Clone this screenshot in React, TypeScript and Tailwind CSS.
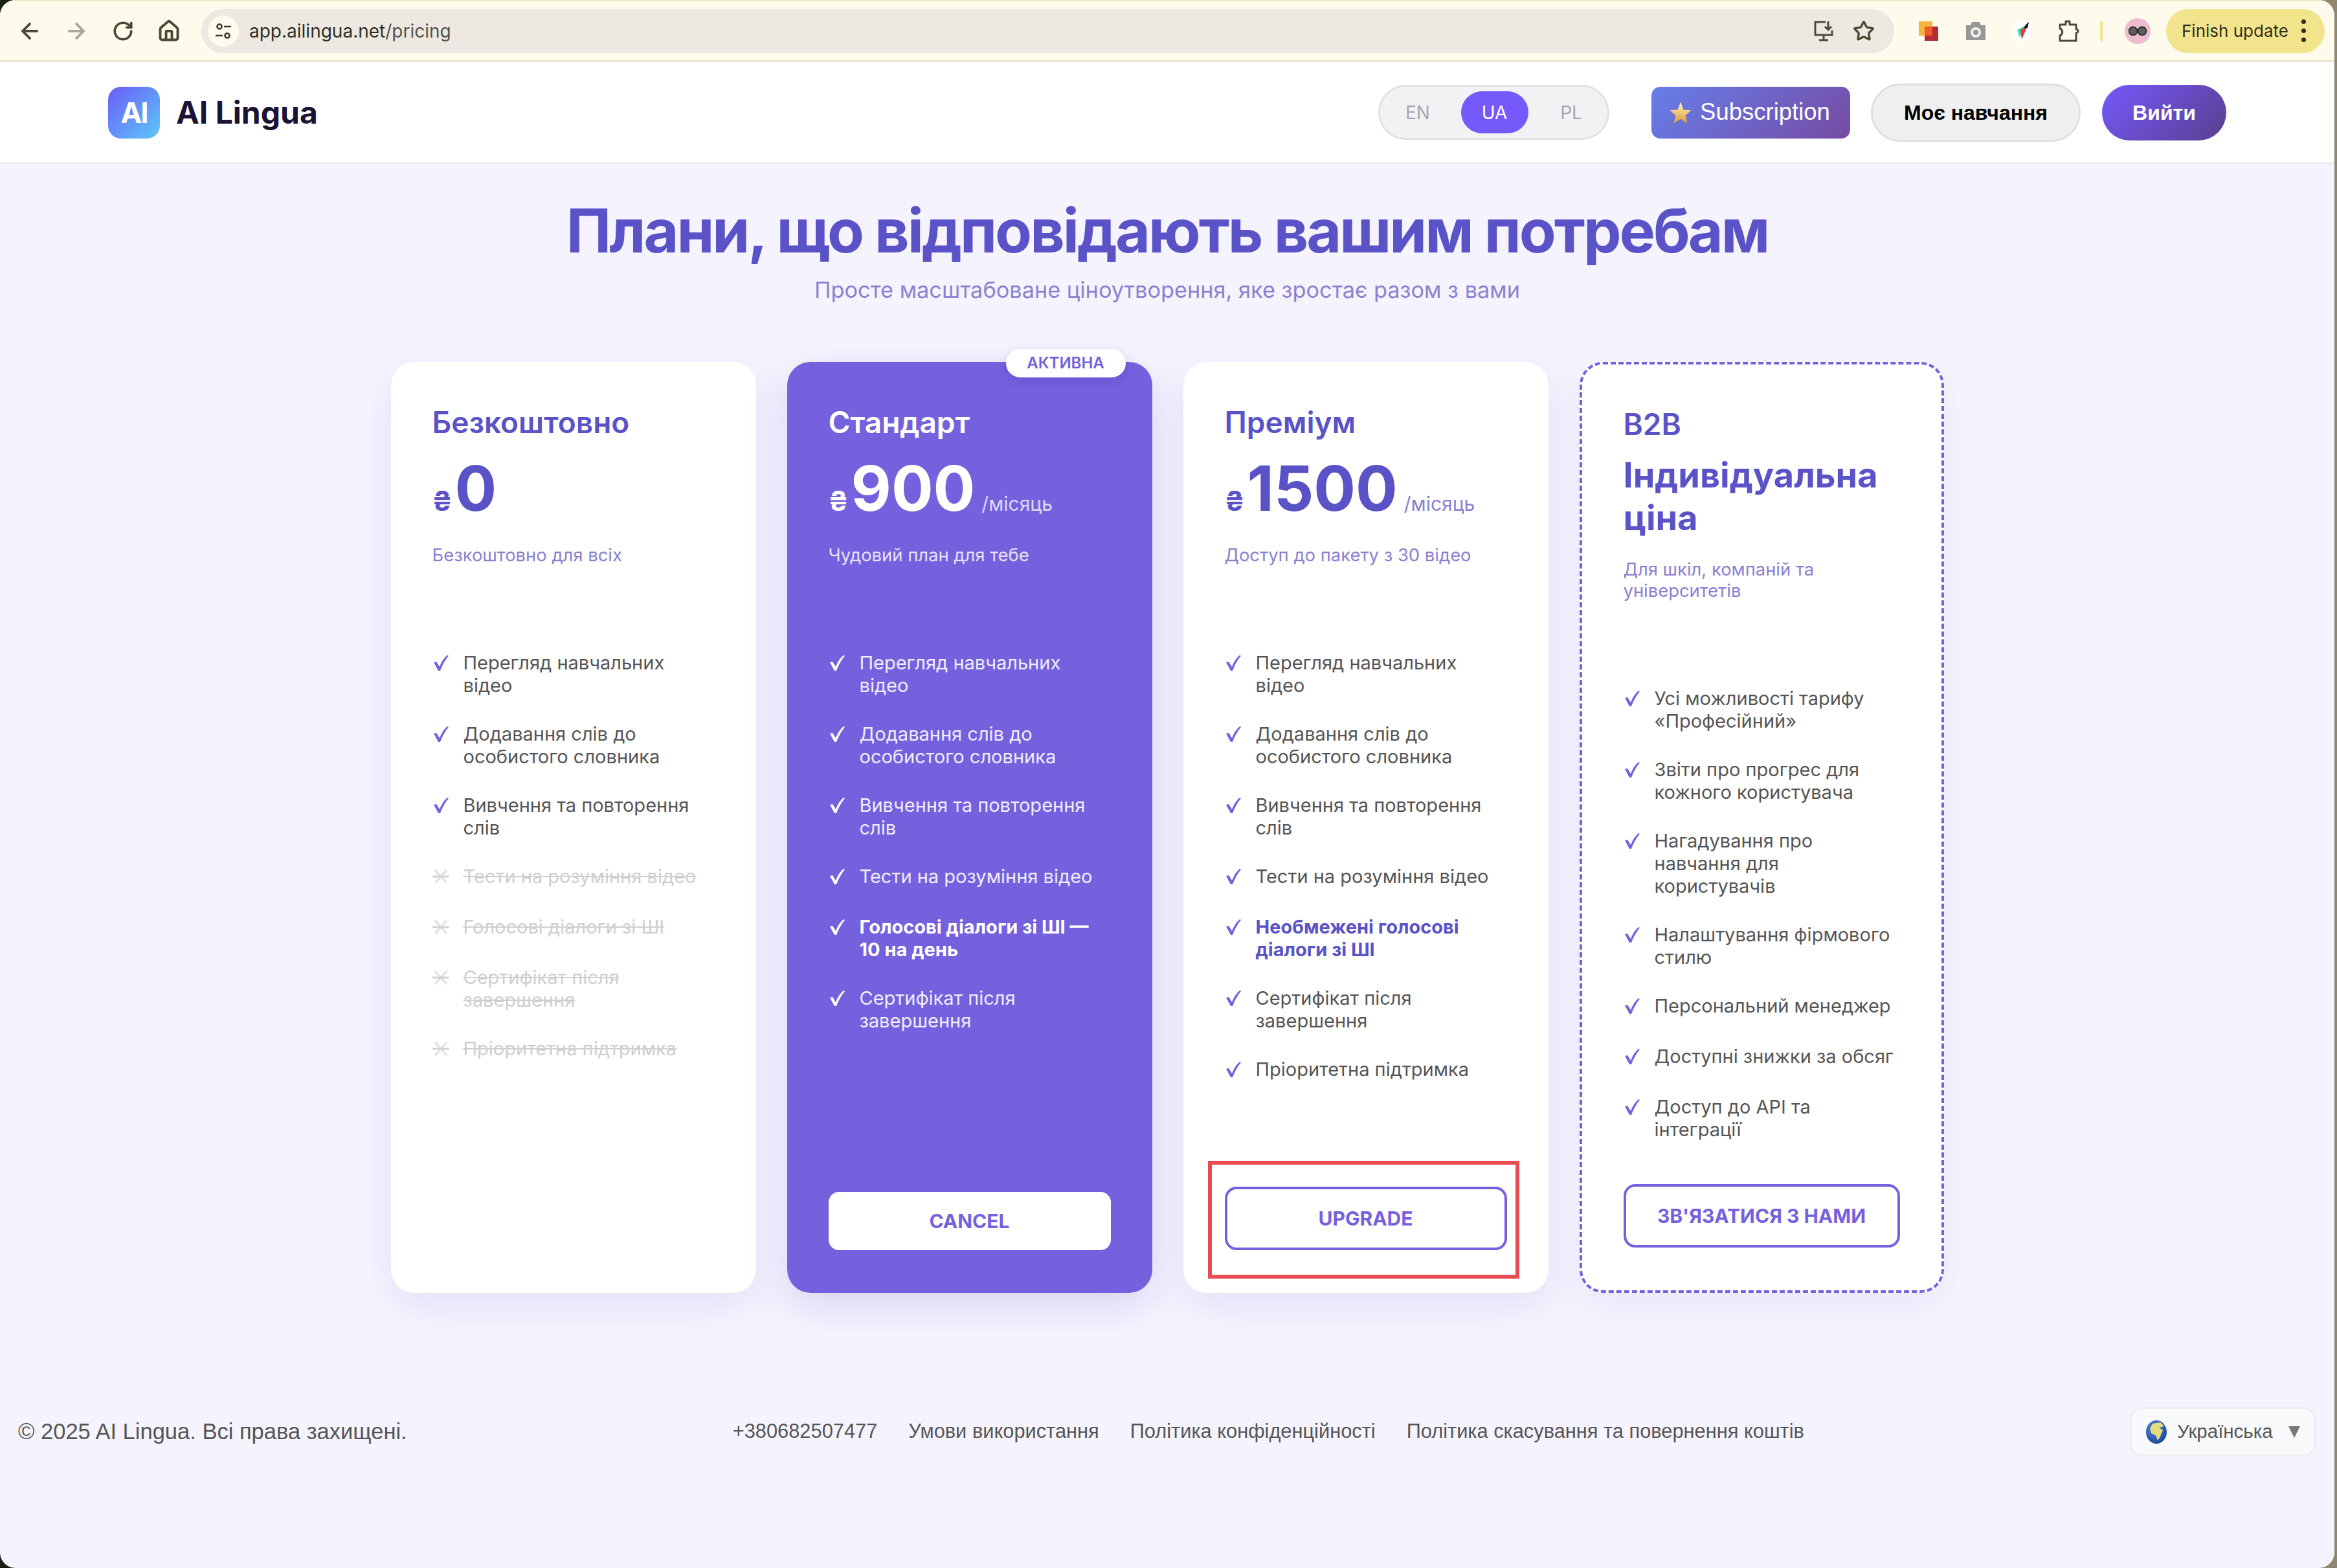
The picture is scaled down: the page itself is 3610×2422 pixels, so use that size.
import React from 'react';
import { ArrowLeft, ArrowRight, RotateCw, Star, House } from 'lucide-react';

type Feature = { text: string; off?: boolean; bold?: boolean };

const base: Feature[] = [
  { text: 'Перегляд навчальних відео' },
  { text: 'Додавання слів до особистого словника' },
  { text: 'Вивчення та повторення слів' },
];

const freeFeatures: Feature[] = [
  ...base,
  { text: 'Тести на розуміння відео', off: true },
  { text: 'Голосові діалоги зі ШІ', off: true },
  { text: 'Сертифікат після завершення', off: true },
  { text: 'Пріоритетна підтримка', off: true },
];

const standardFeatures: Feature[] = [
  ...base,
  { text: 'Тести на розуміння відео' },
  { text: 'Голосові діалоги зі ШІ — 10 на день', bold: true },
  { text: 'Сертифікат після завершення' },
];

const premiumFeatures: Feature[] = [
  ...base,
  { text: 'Тести на розуміння відео' },
  { text: 'Необмежені голосові діалоги зі ШІ', bold: true },
  { text: 'Сертифікат після завершення' },
  { text: 'Пріоритетна підтримка' },
];

const b2bFeatures: Feature[] = [
  { text: 'Усі можливості тарифу «Професійний»' },
  { text: 'Звіти про прогрес для кожного користувача' },
  { text: 'Нагадування про навчання для користувачів' },
  { text: 'Налаштування фірмового стилю' },
  { text: 'Персональний менеджер' },
  { text: 'Доступні знижки за обсяг' },
  { text: 'Доступ до API та інтеграції' },
];

const CheckMark = ({ color }: { color: string }) => (
  <svg width="26" height="26" viewBox="0 0 26 26" className="shrink-0 mt-[5px]">
    <path d="M2 12 L6 11 L11 19 C14 11 18 5 23 1 L25 2 C19 9 15 17 12 25 L9 25 Z" fill={color} />
  </svg>
);

const CrossMark = () => (
  <svg width="26" height="26" viewBox="0 0 26 26" className="shrink-0 mt-[5px]">
    <path d="M4 3 L22 23 M22 3 L4 23" fill="none" stroke="#e4e4e4" strokeWidth="3.6" />
    <path d="M0 13 H26" fill="none" stroke="#d2d2d2" strokeWidth="3" />
  </svg>
);

const FeatureList = ({ items, light, accent }: { items: Feature[]; light?: boolean; accent?: boolean }) => (
  <ul className="flex flex-col gap-[40px]">
    {items.map((f) => (
      <li key={f.text} className="flex min-h-[38px] text-[29px] leading-[35px]">
        <span className="w-[48px] shrink-0">
          {f.off ? <CrossMark /> : <CheckMark color={light ? '#ffffff' : '#7561de'} />}
        </span>
        <span
          className={
            f.off
              ? 'text-[#cfcfcf] line-through'
              : f.bold && accent
                ? 'font-bold text-[#5a52c7]'
                : f.bold
                  ? 'font-bold text-white'
                  : light
                    ? 'text-[#f1eefc]'
                    : 'text-[#555555]'
          }
        >
          {f.text}
        </span>
      </li>
    ))}
  </ul>
);

const Price = ({ value, light }: { value: string; light?: boolean }) => (
  <div className={`mt-[24px] flex h-[100px] items-baseline ${light ? 'text-white' : 'text-[#5a52c7]'}`}>
    <span className="mr-[4px] text-[42px] font-bold">₴</span>
    <span className="text-[96px] leading-[100px] font-bold">{value}</span>
    {value !== '0' && (
      <span className={`ml-[10px] text-[30px] ${light ? 'text-[#dcd7f7]' : 'text-[#8a80d0]'}`}>/місяць</span>
    )}
  </div>
);

const AppWindow = () => (
  <div className="relative w-[3606px] h-[2422px] overflow-hidden rounded-[24px] bg-[#f5f4fe]">
    {/* browser toolbar */}
    <div className="flex h-[96px] items-center border-t-[2px] border-b-[3px] border-t-[#e9e5c9] border-b-[#e8e4cf] bg-[#fefaec] pl-[29px] pr-[13px] text-[#4c4a35]">
      <ArrowLeft size={38} strokeWidth={2.4} className="-ml-[2px]" />
      <ArrowRight size={38} strokeWidth={2.4} className="ml-[34px] text-[#aaa795]" />
      <RotateCw size={34} strokeWidth={2.6} className="ml-[36px]" />
      <House size={36} strokeWidth={2.6} className="ml-[36px]" />
      <div className="ml-[32px] flex h-[68px] w-[2615px] items-center rounded-full bg-[#ede9e2] pl-[10px] pr-[30px]">
        <div className="flex h-[48px] w-[48px] items-center justify-center rounded-full bg-[#fefaec]">
          <svg width="28" height="28" viewBox="0 0 28 28" fill="none" stroke="#3a3828" strokeWidth="2.6">
            <circle cx="8" cy="7" r="3.5" />
            <path d="M15 7 H26 M2 21 H13" />
            <circle cx="20" cy="21" r="3.5" />
          </svg>
        </div>
        <span className="ml-[16px] font-['Inter',sans-serif] text-[28px] text-[#302e24]">
          app.ailingua.net<span className="text-[#55534a]">/pricing</span>
        </span>
        <svg width="34" height="34" viewBox="0 0 34 34" fill="none" stroke="#4c4a35" strokeWidth="3" className="ml-auto">
          <path d="M20 3 H4 V23 H30 V16 M10 31 H24 M17 24 V31" />
          <path d="M24 2 V15 M19 10 L24 15 L29 10" />
        </svg>
        <Star size={34} strokeWidth={2.4} className="ml-[28px]" />
      </div>
      <svg width="32" height="32" viewBox="0 0 32 32" className="ml-[37px]">
        <rect x="1" y="1" width="21" height="22" fill="#f6b53c" />
        <rect x="10" y="9" width="21" height="22" fill="#b52a35" />
        <rect x="10" y="9" width="12" height="14" fill="#f05a2b" />
      </svg>
      <svg width="32" height="30" viewBox="0 0 32 30" className="ml-[41px]">
        <path d="M1 6 H8 L10 1 H22 L24 6 H31 V29 H1 Z" fill="#979797" />
        <circle cx="16" cy="17" r="8" fill="#f0efea" />
        <circle cx="16" cy="17" r="4" fill="#979797" />
      </svg>
      <svg width="32" height="32" viewBox="0 0 32 32" className="ml-[40px]">
        <ellipse cx="16" cy="16" rx="15" ry="16" fill="#ffffff" />
        <path d="M8 14 L20 8 L12 26 Z" fill="#35e0c0" />
        <path d="M13 14 L24 8 L15 29 Z" fill="#ef3b2d" />
        <path d="M18 12 C20 7 23 4 26 2 L24 11 Z" fill="#111111" />
      </svg>
      <svg width="34" height="34" viewBox="0 0 34 34" fill="none" stroke="#4c4a35" strokeWidth="3" className="ml-[38px]">
        <path d="M4 7 H13 V2 H19 V7 H29 V14 C33 15 33 19 29 20 V32 H4 V24 C9 22 9 15 4 13 Z" strokeLinejoin="round" />
      </svg>
      <div className="ml-[32px] h-[32px] w-[4px] rounded bg-[#f1e48c]" />
      <div className="ml-[34px] flex h-[40px] w-[40px] items-center justify-center rounded-full bg-[#edbcd0]">
        <svg width="32" height="16" viewBox="0 0 32 16">
          <circle cx="9" cy="8" r="6.5" fill="#5d5d5d" stroke="#222222" strokeWidth="1.5" />
          <circle cx="23" cy="8" r="6.5" fill="#5d5d5d" stroke="#222222" strokeWidth="1.5" />
        </svg>
      </div>
      <div className="ml-[24px] flex h-[68px] w-[245px] items-center rounded-full bg-[#f2e48c] pl-[24px] text-[#302e1a]">
        <span className="font-['Inter',sans-serif] text-[26px] whitespace-nowrap">Finish update</span>
        <span className="ml-[20px] flex flex-col gap-[7px]">
          <i className="block h-[7px] w-[7px] rounded-full bg-[#302e1a]" />
          <i className="block h-[7px] w-[7px] rounded-full bg-[#302e1a]" />
          <i className="block h-[7px] w-[7px] rounded-full bg-[#302e1a]" />
        </span>
      </div>
    </div>

    {/* site header */}
    <header className="flex h-[157px] items-center border-b-[2px] border-[#e9e8f0] bg-white pl-[167px] pr-[167px]">
      <div className="flex h-[80px] w-[80px] items-center justify-center rounded-[20px] bg-[linear-gradient(135deg,#6c5cf6,#5ac8fa)] text-[44px] font-bold tracking-[-2px] text-white">
        AI
      </div>
      <span className="ml-[25px] text-[48px] font-bold text-[#1a1333]">AI Lingua</span>
      <div className="ml-auto flex h-[85px] w-[357px] items-center justify-between rounded-full border-[3px] border-[#e2e2e6] bg-[#f2f2f5] pl-[38px] pr-[36px] text-[28px] text-[#a5a7b0]">
        <span className="w-[40px] text-center">EN</span>
        <span className="flex h-[65px] w-[104px] items-center justify-center rounded-full bg-[#7559fb] text-white">UA</span>
        <span className="w-[40px] text-center">PL</span>
      </div>
      <div className="ml-[65px] flex h-[80px] w-[307px] items-center justify-center gap-[12px] rounded-[14px] bg-[linear-gradient(135deg,#667eea,#764ba2)] font-['Liberation_Sans',sans-serif] text-[36.5px] text-white">
        <svg width="36" height="36" viewBox="0 0 24 24" className="-ml-[4px]">
          <defs>
            <linearGradient id="star" x1="0" y1="0" x2="0" y2="1">
              <stop offset="0" stopColor="#fff6c8" />
              <stop offset="1" stopColor="#e0982c" />
            </linearGradient>
          </defs>
          <path d="M12 1 L15 9 L23 9.5 L17 15 L19 23 L12 18.5 L5 23 L7 15 L1 9.5 L9 9 Z" fill="url(#star)" />
        </svg>
        Subscription
      </div>
      <div className="ml-[32px] flex h-[90px] w-[324px] items-center justify-center rounded-full border-[3px] border-[#e0e0e0] bg-[#efefef] font-['Liberation_Sans',sans-serif] text-[32px] font-bold text-black">
        Моє навчання
      </div>
      <div className="ml-[33px] flex h-[86px] w-[192px] items-center justify-center rounded-full bg-[linear-gradient(135deg,#7559fb,#5a3f8f)] font-['Liberation_Sans',sans-serif] text-[32px] font-bold text-white">
        Вийти
      </div>
    </header>

    <main className="flex flex-col items-center pt-[45px]">
      <h1 className="text-[93px] leading-[116px] font-bold tracking-[-3px] text-[#5a52c7]">
        Плани, що відповідають вашим потребам
      </h1>
      <p className="mt-[12px] text-[34.3px] leading-[44px] text-[#8b82cf]">
        Просте масштабоване ціноутворення, яке зростає разом з вами
      </p>

      <div className="mt-[89px] flex gap-[48px]">
        {/* free */}
        <div className="flex h-[1438px] w-[564px] flex-col rounded-[36px] bg-white p-[64px] shadow-[0_20px_60px_rgba(100,90,200,0.12)]">
          <h2 className="mt-[1px] text-[46px] leading-[56px] font-semibold text-[#5a52c7]">Безкоштовно</h2>
          <Price value="0" />
          <p className="mt-[37px] h-[165px] text-[27.4px] leading-[33px] text-[#8a80d0]">Безкоштовно для всіх</p>
          <FeatureList items={freeFeatures} />
        </div>

        {/* standard, active */}
        <div className="relative flex h-[1438px] w-[564px] flex-col rounded-[36px] bg-[#7561de] px-[64px] pt-[64px] pb-[66px] shadow-[0_20px_60px_rgba(100,90,200,0.2)]">
          <span className="absolute right-[41px] top-[-20px] flex h-[44px] w-[185px] items-center justify-center rounded-full bg-white text-[24px] font-semibold text-[#7561de] shadow-[0_6px_16px_rgba(60,40,160,0.2)]">
            АКТИВНА
          </span>
          <h2 className="mt-[1px] text-[46px] leading-[56px] font-semibold text-white">Стандарт</h2>
          <Price value="900" light />
          <p className="mt-[37px] h-[165px] text-[27.4px] leading-[33px] text-[#e6e2fa]">Чудовий план для тебе</p>
          <FeatureList items={standardFeatures} light />
          <button className="mt-auto h-[90px] rounded-[16px] bg-white text-[30px] font-bold text-[#7561de]">CANCEL</button>
        </div>

        {/* premium */}
        <div className="relative flex h-[1438px] w-[564px] flex-col rounded-[36px] bg-white px-[64px] pt-[64px] pb-[66px] shadow-[0_20px_60px_rgba(100,90,200,0.12)]">
          <h2 className="mt-[1px] text-[46px] leading-[56px] font-semibold text-[#5a52c7]">Преміум</h2>
          <Price value="1500" />
          <p className="mt-[37px] h-[165px] text-[27.4px] leading-[33px] text-[#8a80d0]">Доступ до пакету з 30 відео</p>
          <FeatureList items={premiumFeatures} accent />
          <button className="mt-auto h-[98px] rounded-[18px] border-[4px] border-[#7561de] bg-white text-[30px] font-bold text-[#7561de]">UPGRADE</button>
          {/* annotation from the original picture */}
          <div className="absolute left-[38px] top-[1234px] h-[182px] w-[481px] border-[6px] border-[#e84b50]" />
        </div>

        {/* b2b */}
        <div className="flex h-[1438px] w-[563px] flex-col rounded-[36px] border-[4px] border-dashed border-[#7561de] bg-white px-[64px] pt-[60px] pb-[66px] shadow-[0_20px_60px_rgba(100,90,200,0.08)]">
          <h2 className="mt-[4px] text-[46px] leading-[56px] font-semibold text-[#5a52c7]">B2B</h2>
          <p className="mt-[18px] text-[54px] leading-[66px] font-bold text-[#5a52c7]">Індивідуальна ціна</p>
          <p className="mt-[30px] h-[198px] text-[27.4px] leading-[33px] text-[#8a80d0]">Для шкіл, компаній та університетів</p>
          <FeatureList items={b2bFeatures} />
          <button className="mt-auto h-[98px] rounded-[18px] border-[4px] border-[#7561de] bg-white text-[30px] font-bold text-[#7561de]">ЗВ'ЯЗАТИСЯ З НАМИ</button>
        </div>
      </div>
    </main>

    <footer className="mt-[176px] flex items-center justify-between px-[28px] font-['Liberation_Sans',sans-serif] text-[#555555]">
      <span className="text-[34.5px]">© 2025 AI Lingua. Всі права захищені.</span>
      <div className="flex gap-[48px] text-[30.8px]">
        <span>+380682507477</span>
        <span>Умови використання</span>
        <span>Політика конфіденційності</span>
        <span>Політика скасування та повернення коштів</span>
      </div>
      <div className="flex h-[77px] w-[288px] items-center rounded-[20px] border-[3px] border-[#eeeef2] bg-[#f8f9fb] pl-[22px] text-[29.5px]">
        <svg width="32" height="36" viewBox="0 0 32 36">
          <defs>
            <radialGradient id="sea" cx="0.4" cy="0.35" r="0.8">
              <stop offset="0" stopColor="#4a86e0" />
              <stop offset="1" stopColor="#173f8f" />
            </radialGradient>
          </defs>
          <ellipse cx="16" cy="18" rx="16" ry="18" fill="url(#sea)" />
          <path d="M10 5 L22 3 L28 9 L20 11 L26 15 L22 25 L18 31 L15 23 L8 20 L6 13 Z" fill="#e6dc7c" />
        </svg>
        <span className="ml-[16px]">Українська</span>
        <span className="ml-[24px] h-0 w-0 border-x-[9px] border-t-[18px] border-x-transparent border-t-[#777777]" />
      </div>
    </footer>
  </div>
);

export default function App() {
  return (
    <div className="h-[2422px] w-[3610px] overflow-hidden bg-[linear-gradient(90deg,#1a1f14,#8f8770)] font-['Inter',sans-serif]">
      <AppWindow />
    </div>
  );
}
